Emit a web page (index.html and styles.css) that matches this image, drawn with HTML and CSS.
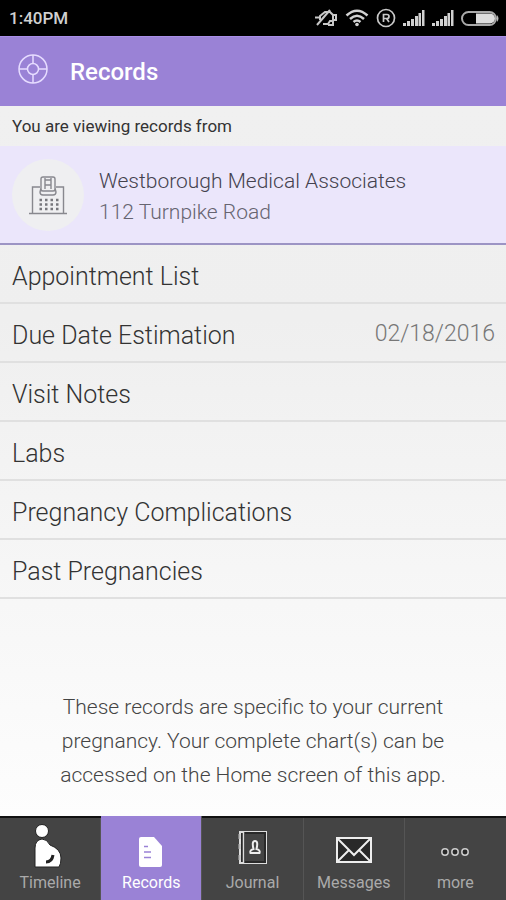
FILE: index.html
```html
<!DOCTYPE html>
<html lang="en">
<head>
<meta charset="utf-8">
<meta name="viewport" content="width=device-width, initial-scale=1">
<title>Records</title>
<link rel="stylesheet" href="styles.css">
</head>
<body>
<div class="status">
  <span class="status-time">1:40PM</span>
  <div class="status-icons">
    <svg width="24" height="20" viewBox="0 0 24 20" fill="none" stroke="#c8c8c8" stroke-width="2"><path d="M1 9.500h5M6 12V8l5-4h5l3 3v6M19 7h3v5h-3M9 16h5l2-3h4M14 17h5v-3"/><path d="M3 17 16 2"/></svg>
    <svg width="24" height="20" viewBox="0 0 24 20" fill="none" stroke="#d2d2d2" stroke-width="2.500"><path d="M1.500 7.500Q12-2 22.500 7.500M5 11Q12 4.500 19 11M8.500 14Q12 11 15.500 14"/><circle cx="12" cy="16.500" r="1.800" fill="#d2d2d2" stroke="none"/></svg>
    <svg width="20" height="20" viewBox="0 0 20 20" fill="none" stroke="#c8c8c8" stroke-width="1.700"><circle cx="10" cy="10" r="8.500"/><path d="M7.500 14V6.500H11a2 2 0 0 1 0 4H7.500M10.500 10.500 13 14"/></svg>
    <svg width="22" height="20" viewBox="0 0 22 20" fill="#d0d0d0"><path d="M0 15h3v3H0zM4 13h3v5H4zM8 11h3v7H8zM12 8h3v10h-3zM15.500 5h2.500v13h-2.500zM19 2h2.500v16H19z"/></svg>
    <svg width="22" height="20" viewBox="0 0 22 20" fill="#d0d0d0"><path d="M0 15h3v3H0zM4 13h3v5H4zM8 11h3v7H8zM12 8h3v10h-3zM15.500 5h2.500v13h-2.500zM19 2h2.500v16H19z"/></svg>
    <svg width="39" height="20" viewBox="0 0 39 20"><rect x="1" y="4" width="34" height="13" rx="6.500" fill="none" stroke="#aaa" stroke-width="2"/><path d="M15 5.500h14a5 5 0 0 1 0 10H15z" fill="#ddd"/><path d="M36 7q3 3.500 0 7z" fill="#bbb"/></svg>
  </div>
</div>
<header class="header">
  <button class="home" type="button" aria-label="Home">
    <svg width="30" height="30" viewBox="0 0 30 30" fill="none" stroke="#e6dcff" stroke-width="1.500"><circle cx="15" cy="15" r="14"/><circle cx="15" cy="15" r="5.500"/><path d="M15 1v8.500M15 20.500V29M1 15h8.500M20.500 15H29"/></svg>
  </button>
  <h1>Records</h1>
</header>
<main class="content">
  <p class="source-label">You are viewing records from</p>
  <section class="clinic">
    <span class="avatar">
      <svg width="40" height="40" viewBox="0 0 40 40" fill="none" stroke="#88888e" stroke-width="1.400"><path d="M1 38.500h38M4.500 38.500V12H12M28 12h7.500v26.500"/><path d="M15 2h10q2 0 2 2v10q0 2-2 2H15q-2 0-2-2V4q0-2 2-2zM17 3v11M23 3v11M17 5h6M17 10h6M13 13l-1 4q0 3 3 3h10q3 0 3-3l-1-4"/><path d="M11.500 25h19M11.500 29.500h19M11.500 34h19" stroke="#77777c" stroke-width="2.500" stroke-dasharray="2.500 3"/></svg>
    </span>
    <div class="clinic-text">
      <p class="clinic-name">Westborough Medical Associates</p>
      <p class="clinic-address">112 Turnpike Road</p>
    </div>
  </section>
  <nav class="records">
    <a href="#appointments">Appointment List</a>
    <a href="#due-date">Due Date Estimation <span class="value">02/18/2016</span></a>
    <a href="#visits">Visit Notes</a>
    <a href="#labs">Labs</a>
    <a href="#complications">Pregnancy Complications</a>
    <a href="#past">Past Pregnancies</a>
  </nav>
  <p class="note">These records are specific to your current<br>pregnancy. Your complete chart(s) can be<br>accessed on the Home screen of this app.</p>
</main>
<nav class="tabs">
  <a href="#timeline">
    <svg width="44" height="44" viewBox="0 0 44 44"><g fill="#fff" stroke="#222" stroke-width="1"><circle cx="14" cy="7" r="6.500"/><path d="M7 43V24q0-8 7-9 5 0 8 6 11 4 11 13 0 6-2 9z"/></g><path d="M18 38q6 0 7-7" fill="none" stroke="#222" stroke-width="3"/></svg>
    Timeline
  </a>
  <a class="active" href="#records" aria-current="page">
    <svg width="44" height="44" viewBox="0 0 44 44"><path d="M12 13h13l8 9v19q0 2-2 2H12q-2 0-2-2V15q0-2 2-2z" fill="#fff"/><path d="M15 22.500h4M15 28h7M15 33.500h7" stroke="#9a82d6" stroke-width="1.500"/></svg>
    Records
  </a>
  <a href="#journal">
    <svg width="44" height="44" viewBox="0 0 44 44" fill="none"><path d="M10 8h26v31H10z" fill="#292929" stroke="#ddd" stroke-width="2"/><path d="M14 9h21v29H14z" fill="#444" stroke="#292929" stroke-width="2"/><path d="M13.500 8v31" stroke="#ddd" stroke-width="1.500"/><path d="M9.500 10v5M9.500 20v5M9.500 31v5" stroke="#bbb" stroke-width="2"/><path d="M20.500 29q-1-3 3-4-2-8 1.500-8t1.500 8q4 1 3 4z" stroke="#eee" stroke-width="2"/></svg>
    Journal
  </a>
  <a href="#messages">
    <svg width="44" height="44" viewBox="0 0 44 44" fill="#292929" stroke="#eee" stroke-width="2"><path d="M5 14h34v24H5z"/><path d="m5 14 17 17 17-17M5 38l12-12M39 38 27 26" fill="none"/></svg>
    Messages
  </a>
  <a href="#more">
    <svg width="44" height="44" viewBox="0 0 44 44" fill="#292929" stroke="#ccc" stroke-width="1.500"><circle cx="12" cy="28" r="3.200"/><circle cx="22" cy="28" r="3.200"/><circle cx="32" cy="28" r="3.200"/></svg>
    more
  </a>
</nav>
</body>
</html>
```
FILE: styles.css
```css
* {
  box-sizing: border-box;
}

body {
  margin: 0;
  min-height: 100vh;
  display: flex;
  flex-direction: column;
  background: #fdfdfd;
  color: #333;
  font-family: Roboto, "Liberation Sans", sans-serif;
  font-weight: 300;
}

h1,
p {
  margin: 0;
}

a {
  color: inherit;
  text-decoration: none;
}

svg {
  display: block;
}

.status {
  display: flex;
  align-items: center;
  justify-content: space-between;
  height: 36px;
  padding: 0 6px 0 9px;
  background: #000;
  color: #d0d0d0;
}

.status-time {
  font-size: 17px;
  font-weight: 500;
}

.status-icons {
  display: flex;
  align-items: center;
  gap: 7px;
}

.header {
  display: flex;
  align-items: center;
  gap: 22px;
  height: 70px;
  padding: 0 18px;
  background: #9a82d6;
  border-top: 1px solid #a98ee8;
  color: #fff;
}

.home {
  padding: 0 0 6px;
  border: 0;
  background: none;
}

.header h1 {
  font-size: 24px;
  font-weight: 500;
}

.content {
  flex: 1;
  background: linear-gradient(#f0f0f0, #efefef 30%, #f6f6f6 65%, #fdfdfd);
}

.source-label {
  padding: 0 12px;
  font-size: 17px;
  line-height: 40px;
  font-weight: 400;
}

.clinic {
  display: flex;
  align-items: center;
  gap: 15px;
  padding: 13px 12px 12px;
  background: #ebe6fb;
  border-bottom: 2px solid #9c94c4;
}

.avatar {
  display: grid;
  place-items: center;
  width: 72px;
  height: 72px;
  border-radius: 50%;
  background: #efeff1;
}

.clinic-text {
  padding-top: 4px;
  font-size: 21px;
  line-height: 31px;
}

.clinic-name {
  color: #44424e;
}

.clinic-address {
  color: #666470;
}

.records a {
  display: flex;
  align-items: center;
  justify-content: space-between;
  height: 59px;
  padding: 5px 11px 0 12px;
  border-bottom: 2px solid #e0e0e0;
  font-size: 25px;
}

.records .value {
  padding-bottom: 4px;
  color: #777;
  font-size: 23px;
}

.note {
  padding: 91px 16px 24px;
  text-align: center;
  color: #444;
  font-size: 21px;
  line-height: 34px;
}

.tabs {
  display: grid;
  grid-template-columns: repeat(5, 1fr);
  background: #444;
  border-top: 2px solid #111;
}

.tabs a {
  display: flex;
  flex-direction: column;
  align-items: center;
  gap: 5px;
  padding: 6px 4px 7px;
  border-right: 1px solid #555;
  color: #aaa;
  font-size: 16px;
  line-height: 20px;
  font-weight: 400;
}

.tabs a:last-child {
  border-right: 0;
}

.tabs .active {
  margin-top: -2px;
  padding-top: 8px;
  background: #9a82d6;
  color: #fff;
}
```
